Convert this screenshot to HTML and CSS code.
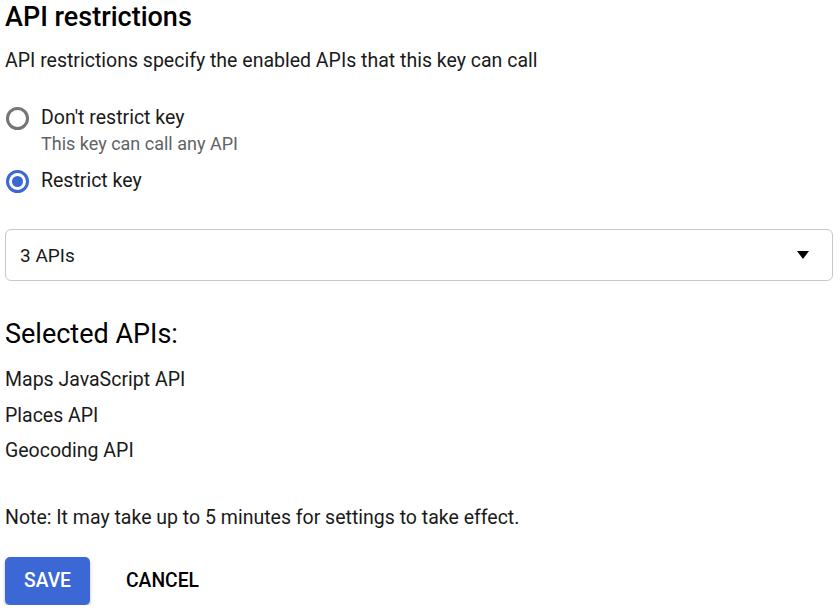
FILE: index.html
```html
<!DOCTYPE html>
<html lang="en">

<head>
    <meta charset="UTF-8">
    <meta name="viewport" content="width=device-width, initial-scale=1.0">
    <title>API restrictions</title>
    <link rel="stylesheet" href="styles.css">
</head>

<body>
    <div class="page">
        <h2 class="title">API restrictions</h2>
        <p class="desc">API restrictions specify the enabled APIs that this key can call</p>

        <div class="radios">
            <label class="radio">
                <span class="circle"></span>
                <span class="radio-text">
                    <span class="radio-label">Don't restrict key</span>
                    <span class="radio-hint">This key can call any API</span>
                </span>
            </label>
            <label class="radio checked">
                <span class="circle"><span class="dot"></span></span>
                <span class="radio-text">
                    <span class="radio-label">Restrict key</span>
                </span>
            </label>
        </div>

        <div class="select">
            <span>3 APIs</span>
            <svg class="arrow" width="12" height="8" viewBox="0 0 12 8">
                <path d="M0 0 L12 0 L6 8 Z" fill="#000"/>
            </svg>
        </div>

        <h3 class="subtitle">Selected APIs:</h3>
        <ul class="apis">
            <li>Maps JavaScript API</li>
            <li>Places API</li>
            <li>Geocoding API</li>
        </ul>

        <p class="note">Note: It may take up to 5 minutes for settings to take effect.</p>

        <div class="buttons">
            <button class="save">SAVE</button>
            <button class="cancel">CANCEL</button>
        </div>
    </div>
</body>

</html>
```

FILE: styles.css
```css
* {
    margin: 0;
    padding: 0;
    box-sizing: border-box;
    font-family: Roboto, "Liberation Sans", sans-serif;
}

body {
    background-color: #fff;
    color: #1a1a1a;
}

.page {
    padding: 0 7px 0 5px;
}

.title {
    font-size: 27px;
    font-weight: 500;
    line-height: 34px;
    color: #000;
}

.desc {
    margin-top: 14px;
    font-size: 19.5px;
    line-height: 26px;
}

.radios {
    margin-top: 32px;
    display: flex;
    flex-direction: column;
    gap: 14px;
}

.radio {
    display: flex;
    align-items: flex-start;
    gap: 12px;
}

.circle {
    width: 23px;
    height: 23px;
    margin-top: 1px;
    margin-left: 1px;
    border: 3px solid #757575;
    border-radius: 50%;
    display: flex;
    align-items: center;
    justify-content: center;
    flex-shrink: 0;
}

.checked .circle {
    border-color: #3b68d5;
}

.dot {
    width: 11px;
    height: 11px;
    border-radius: 50%;
    background-color: #3b68d5;
}

.radio-text {
    display: flex;
    flex-direction: column;
}

.radio-label {
    font-size: 19.5px;
    line-height: 24px;
}

.radio-hint {
    margin-top: 3px;
    font-size: 18px;
    line-height: 22px;
    color: #5f6368;
}

.select {
    margin-top: 36px;
    height: 52px;
    border: 1px solid #c8c8c8;
    border-radius: 6px;
    display: flex;
    align-items: center;
    justify-content: space-between;
    padding: 0 23px 0 14px;
    font-size: 19px;
}

.subtitle {
    margin-top: 37px;
    font-size: 27px;
    font-weight: 400;
    line-height: 32px;
    color: #000;
}

.apis {
    list-style: none;
    margin-top: 12px;
    font-size: 19.5px;
}

.apis li {
    line-height: 35.5px;
}

.note {
    margin-top: 36px;
    font-size: 19.5px;
    line-height: 26px;
}

.buttons {
    margin-top: 26px;
    display: flex;
    align-items: center;
    gap: 17px;
}

.buttons button {
    height: 48px;
    border: none;
    border-radius: 5px;
    font-size: 19.3px;
    font-weight: 500;
    padding: 0 19px;
    cursor: pointer;
}

.save {
    background-color: #3b68d5;
    color: #fff;
    box-shadow: 0 2px 3px rgba(0, 0, 0, 0.3);
}

.cancel {
    background: none;
    color: #000;
}
```
